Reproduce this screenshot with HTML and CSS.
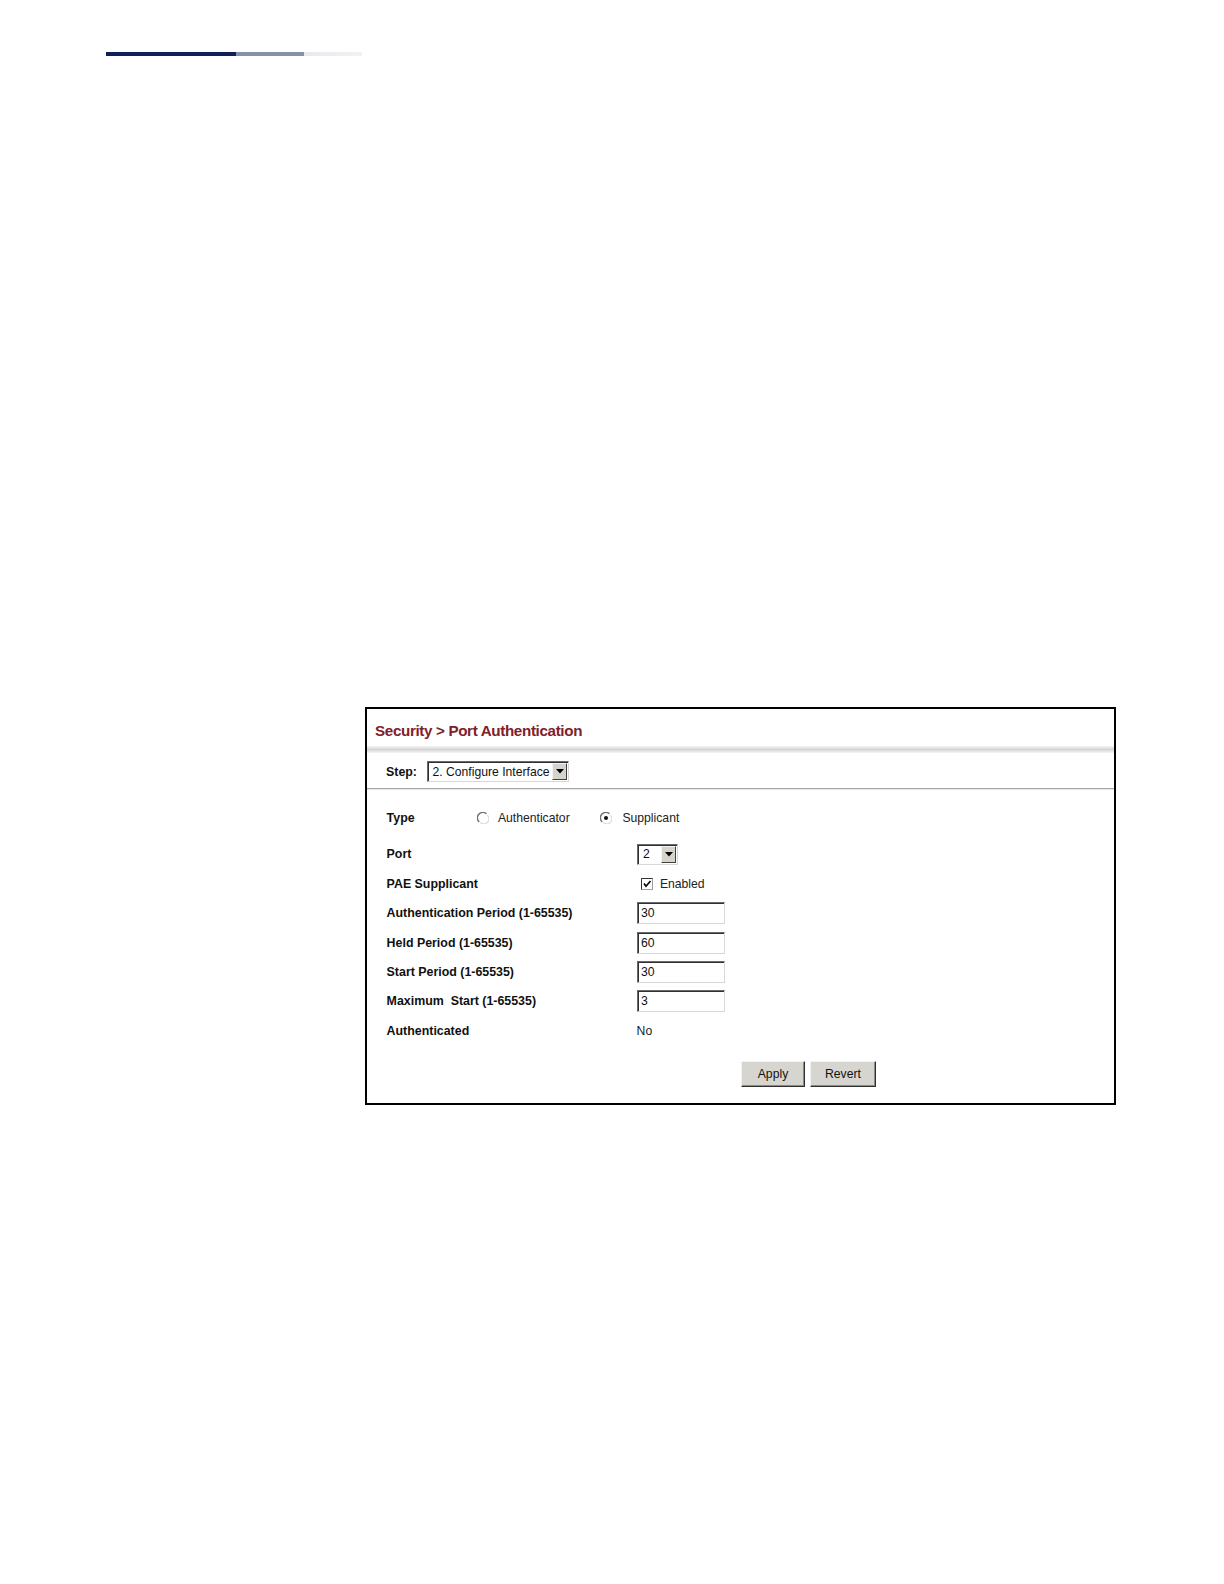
FILE: index.html
```html
<!DOCTYPE html>
<html>
<head>
<meta charset="utf-8">
<link rel="stylesheet" href="styles.css">
</head>
<body>
<div class="topbar"><span class="seg seg1"></span><span class="seg seg2"></span><span class="seg seg3"></span></div>

<div class="frame">
  <div class="title">Security &gt; Port Authentication</div>
  <div class="band"></div>
  <div class="steprow">
    <span class="lbl step-lbl">Step:</span>
    <div class="select step-select"><span class="sel-text">2. Configure Interface</span><span class="sel-btn"><svg width="8" height="5" viewBox="0 0 8 5"><path d="M0 0H8L4 4.5Z" fill="#000"/></svg></span></div>
  </div>
  <div class="rule"></div>
  <div class="form">
    <div class="row type-row">
      <span class="lbl type-lbl">Type</span>
      <span class="radio"><svg width="12" height="12" viewBox="0 0 12 12"><circle cx="6" cy="6" r="5.5" fill="#fff"/><path d="M2.2 10 A5 5 0 0 1 9.5 1.8" stroke="#6e6e6e" stroke-width="1.4" fill="none"/><path d="M10.4 3.2 A5 5 0 0 1 3.2 10.4" stroke="#dcdcdc" stroke-width="1.2" fill="none"/></svg></span>
      <span class="val opt1">Authenticator</span>
      <span class="radio radio2"><svg width="12" height="12" viewBox="0 0 12 12"><circle cx="6" cy="6" r="5.5" fill="#fff"/><path d="M2.2 10 A5 5 0 0 1 9.5 1.8" stroke="#6e6e6e" stroke-width="1.4" fill="none"/><path d="M10.4 3.2 A5 5 0 0 1 3.2 10.4" stroke="#dcdcdc" stroke-width="1.2" fill="none"/><circle cx="6" cy="6" r="2" fill="#111"/></svg></span>
      <span class="val">Supplicant</span>
    </div>
    <div class="row port-row">
      <span class="lbl col-lbl">Port</span>
      <div class="select port-select"><span class="sel-text">2</span><span class="sel-btn"><svg width="8" height="5" viewBox="0 0 8 5"><path d="M0 0H8L4 4.5Z" fill="#000"/></svg></span></div>
    </div>
    <div class="row">
      <span class="lbl col-lbl">PAE Supplicant</span>
      <span class="check"><svg width="12" height="12" viewBox="0 0 12 12"><rect x="0.5" y="0.5" width="11" height="11" fill="#fff" stroke="#a0a0a0"/><path d="M0.5 11.5V0.5H11.5" stroke="#333" fill="none"/><path d="M3 5.5L5 8.3L9.5 3" stroke="#000" stroke-width="1.6" fill="none"/></svg></span>
      <span class="val">Enabled</span>
    </div>
    <div class="row">
      <span class="lbl col-lbl">Authentication Period (1-65535)</span>
      <div class="input">30</div>
    </div>
    <div class="row">
      <span class="lbl col-lbl">Held Period (1-65535)</span>
      <div class="input">60</div>
    </div>
    <div class="row">
      <span class="lbl col-lbl">Start Period (1-65535)</span>
      <div class="input">30</div>
    </div>
    <div class="row">
      <span class="lbl col-lbl">Maximum&nbsp; Start (1-65535)</span>
      <div class="input">3</div>
    </div>
    <div class="row">
      <span class="lbl col-lbl">Authenticated</span>
      <span class="val no">No</span>
    </div>
    <div class="buttons">
      <div class="btn btn-apply">Apply</div>
      <div class="btn btn-revert">Revert</div>
    </div>
  </div>
</div>
</body>
</html>
```

FILE: styles.css
```css
* { box-sizing: border-box; }
body {
  margin: 0;
  background: #fff;
  font-family: "Liberation Sans", Arial, sans-serif;
  color: #111;
}
.topbar {
  display: flex;
  margin: 52px 0 0 106px;
  height: 4px;
}
.seg { display: block; height: 4px; }
.seg1 { width: 130px; background: #0d2157; }
.seg2 { width: 68px; background: #8590aa; }
.seg3 { width: 58px; background: linear-gradient(to right, #e8e9ee, #f2f2f4); }

.frame {
  margin: 651px 0 0 365px;
  width: 751px;
  height: 398px;
  border: 2px solid #000;
}
.title {
  height: 37px;
  padding: 13px 0 0 8px;
  font-size: 15.2px;
  line-height: 18px;
  font-weight: bold;
  color: #80202a;
  letter-spacing: -0.35px;
}
.band {
  height: 7px;
  background: linear-gradient(to bottom, #f6f6f6, #d4d4d4 50%, #f6f6f6);
}
.steprow {
  display: flex;
  align-items: center;
  height: 35px;
  padding: 2px 0 0 19px;
}
.lbl {
  font-size: 12.4px;
  font-weight: bold;
  color: #111;
  white-space: nowrap;
}
.val {
  font-size: 12.2px;
  color: #222;
  white-space: nowrap;
}
.step-lbl { width: 41.4px; }
.select {
  display: flex;
  align-items: center;
  height: 21px;
  border: 1px solid;
  border-color: #6a6a6a #d8d8d8 #d8d8d8 #6a6a6a;
  box-shadow: inset 1px 1px 0 #303030;
  background: #fff;
  padding: 1px 1px 1px 4px;
}
.sel-text {
  flex: 1;
  font-size: 12.2px;
  color: #111;
  white-space: nowrap;
}
.sel-btn {
  width: 15px;
  height: 17px;
  background: #d6d3cc;
  border: 1px solid;
  border-color: #f4f4f4 #404040 #404040 #f4f4f4;
  display: flex;
  align-items: center;
  justify-content: center;
}
.step-select { width: 142px; }
.port-select { width: 41px; padding-left: 5px; }
.rule {
  height: 2px;
  border-top: 1px solid #a8a8a8;
  border-bottom: 1px solid #e6e6e6;
}
.form {
  padding: 13px 0 0 19.6px;
}
.row {
  display: flex;
  align-items: center;
  height: 29.4px;
}
.type-row { height: 29px; margin-bottom: 7.8px; }
.type-lbl { width: 90px; }
.radio { display: flex; width: 21.3px; }
.radio2 { width: 22.5px; }
.opt1 { width: 102px; }
.col-lbl { width: 250.5px; }
.check { display: flex; margin-left: 3.5px; width: 19.3px; }
.input {
  width: 88px;
  height: 22px;
  border: 1px solid;
  border-color: #6a6a6a #d8d8d8 #d8d8d8 #6a6a6a;
  box-shadow: inset 1px 1px 0 #303030;
  font-size: 12.2px;
  line-height: 20px;
  padding-left: 3px;
  color: #111;
}
.no { margin-left: -0.5px; }
.buttons {
  display: flex;
  gap: 5px;
  margin: 15.4px 0 0 354.4px;
}
.btn {
  height: 26.5px;
  background: #d6d5cf;
  border: 1px solid;
  border-color: #f2f2f2 #303030 #303030 #f2f2f2;
  box-shadow: inset -1px -1px 0 #8a8a8a;
  font-size: 12.2px;
  line-height: 24.5px;
  text-align: center;
  color: #111;
}
.btn-apply { width: 64px; }
.btn-revert { width: 66px; }
```
